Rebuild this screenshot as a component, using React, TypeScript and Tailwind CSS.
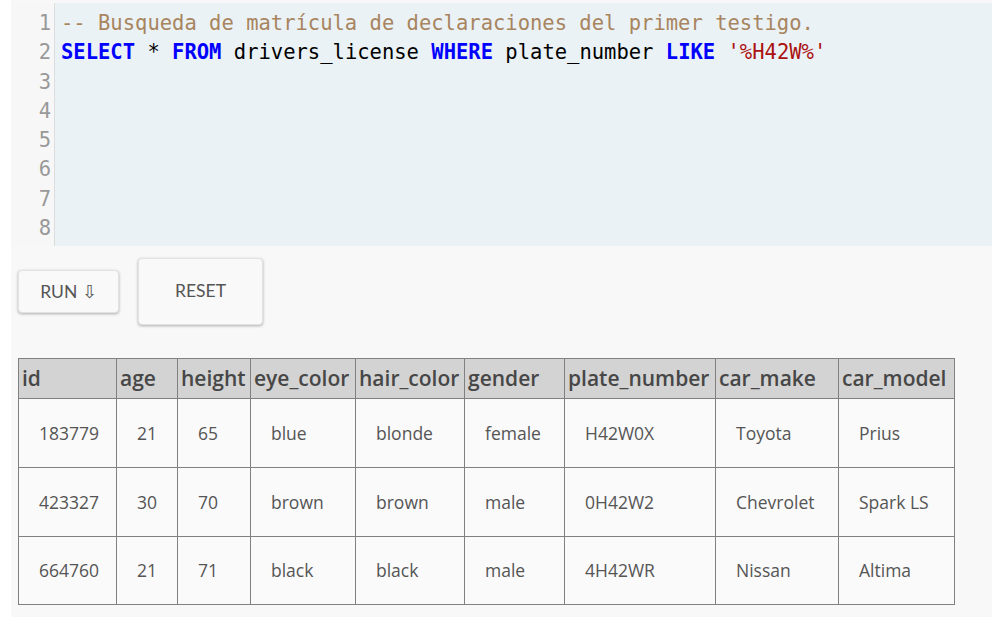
import React from "react";

const codeLines: React.ReactNode[] = [
  <span className="text-[#a8845f]">-- Busqueda de matrícula de declaraciones del primer testigo.</span>,
  <>
    <span className="text-[#0000ff] font-bold">SELECT</span> * <span className="text-[#0000ff] font-bold">FROM</span> drivers_license{" "}
    <span className="text-[#0000ff] font-bold">WHERE</span> plate_number <span className="text-[#0000ff] font-bold">LIKE</span>{" "}
    <span className="text-[#aa1111]">'%H42W%'</span>
  </>,
  "",
  "",
  "",
  "",
  "",
  "",
];

const columns = [
  { name: "id", width: "w-[98px]" },
  { name: "age", width: "w-[61px]" },
  { name: "height", width: "w-[73px]" },
  { name: "eye_color", width: "w-[105px]" },
  { name: "hair_color", width: "w-[109px]" },
  { name: "gender", width: "w-[100px]" },
  { name: "plate_number", width: "w-[151px]" },
  { name: "car_make", width: "w-[123px]" },
  { name: "car_model", width: "w-[116px]" },
];

const rows = [
  ["183779", "21", "65", "blue", "blonde", "female", "H42W0X", "Toyota", "Prius"],
  ["423327", "30", "70", "brown", "brown", "male", "0H42W2", "Chevrolet", "Spark LS"],
  ["664760", "21", "71", "black", "black", "male", "4H42WR", "Nissan", "Altima"],
];

const App = () => {
  return (
    <div className="min-h-[617px] bg-white pl-[11px]">
      <div className="min-h-[617px] bg-[#f8f8f8] pt-[3px]">
        {/* editor */}
        <div className="flex font-['DejaVu_Sans_Mono',monospace] text-[20.5px] leading-[29.3px]">
          <div className="w-[44px] shrink-0 bg-[#f7f7f7] border-r border-[#dddddd] pt-[6px] pb-[3px] pr-[3px] text-right text-[#999999]">
            {codeLines.map((_, i) => (
              <div key={i} className="h-[29.3px]">{i + 1}</div>
            ))}
          </div>
          <div className="flex-1 bg-[#eaf2f5] pt-[6px] pb-[3px] pl-[6px] text-black whitespace-pre">
            {codeLines.map((line, i) => (
              <div key={i} className="h-[29.3px]">{line}</div>
            ))}
          </div>
        </div>

        {/* buttons */}
        <div className="flex items-center gap-[19px] pl-[7px] mt-[12px] font-['Lato',sans-serif] text-[17.5px] text-[#555555]">
          <button
            type="button"
            className="w-[101px] h-[43px] bg-[#f9f9f9] border border-[#e2e2e2] rounded-[4px] shadow-[0_1px_3px_rgba(0,0,0,0.3)]"
          >
            RUN ⇩
          </button>
          <button
            type="button"
            className="w-[125px] h-[67px] bg-[#f9f9f9] border border-[#e2e2e2] rounded-[4px] shadow-[0_1px_3px_rgba(0,0,0,0.3)] pb-[2px]"
          >
            RESET
          </button>
        </div>

        {/* results */}
        <div className="pl-[7px] mt-[33px] pb-[12px]">
          <table className="table-fixed w-[936px] border-collapse font-['Open_Sans',sans-serif]">
            <thead>
              <tr className="bg-[#d3d3d3] h-[40px]">
                {columns.map((c) => (
                  <th
                    key={c.name}
                    className={`${c.width} border border-[#808080] px-[3px] text-left text-[21px] font-semibold text-[#474747] whitespace-nowrap`}
                  >
                    {c.name}
                  </th>
                ))}
              </tr>
            </thead>
            <tbody>
              {rows.map((r, i) => (
                <tr key={i} className="h-[68.7px] bg-[#fafafa]">
                  {r.map((cell, j) => (
                    <td
                      key={j}
                      className="border border-[#808080] pl-[20px] pr-[4px] text-[17.5px] text-[#555555] whitespace-nowrap"
                    >
                      {cell}
                    </td>
                  ))}
                </tr>
              ))}
            </tbody>
          </table>
        </div>
      </div>
    </div>
  );
};

export default App;
